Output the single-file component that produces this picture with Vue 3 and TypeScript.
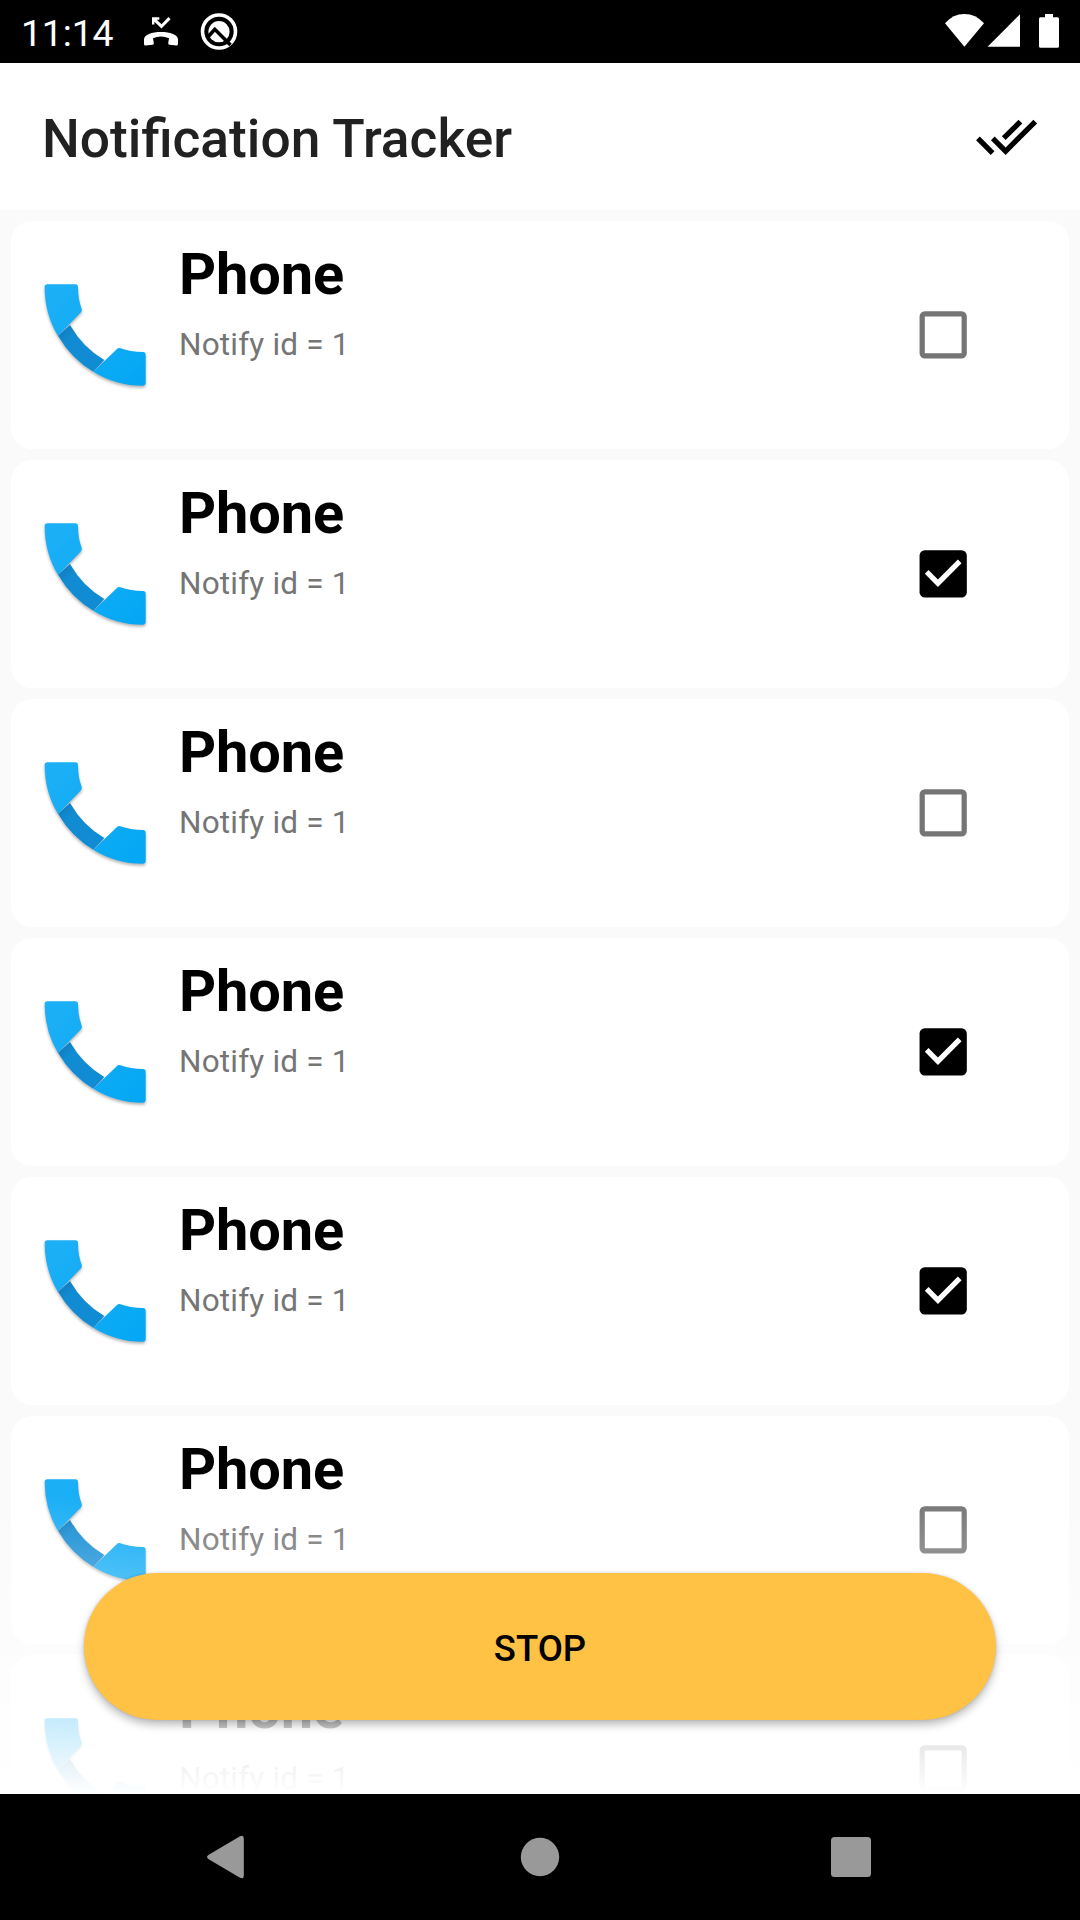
<script setup lang="ts">
interface NotificationItem {
  key: number
  title: string
  detail: string
  checked: boolean
}

const items: NotificationItem[] = [false, true, false, true, true, false, false].map(
  (checked, key) => ({ key, title: 'Phone', detail: 'Notify id = 1', checked }),
)
</script>

<template>
  <div class="screen">
    <header class="status">
      <span class="clock">11:14</span>
      <svg class="missed" width="36" height="32" viewBox="143 16 36 32" fill="#fff">
        <path d="M152 17.2H159.3V19.8H156.8L161.5 24.2L168.4 17.1L170.6 19.2L161.5 28.4L154.4 21.8V24.6H152Z" />
        <path d="M144 44V39.5C144 34.5 152 32 161 32S178 34.5 178 39.5V44Q178 45.6 176.4 45.4L169.5 44.8Q168 44.6 168.2 43L169 38.2Q161 35 153 38.2L153.8 43Q154 44.6 152.5 44.8L145.6 45.6Q144 45.6 144 44Z" />
      </svg>
      <svg class="badge" width="40" height="40" viewBox="199 12 40 40">
        <circle cx="219" cy="31.5" r="16.5" fill="none" stroke="#fff" stroke-width="3.6" />
        <circle cx="219" cy="31.7" r="10.6" fill="#fff" />
        <path d="M207.5 37.5L214.8 29.3L230.5 45" fill="none" stroke="#000" stroke-width="3.6" />
      </svg>
      <svg class="system" width="120" height="40" viewBox="942 11 120 40" fill="#fff">
        <path d="M964.4 46.8L945 23.3Q953 14 964.4 14T984 23.3Z" />
        <path d="M987.6 46.8H1020V14.2Z" />
        <path d="M1045 14H1053V17.3H1057.5Q1059 17.3 1059 18.8V46.3Q1059 47.8 1057.5 47.8H1040.5Q1039 47.8 1039 46.3V18.8Q1039 17.3 1040.5 17.3H1045Z" />
      </svg>
    </header>

    <div class="toolbar">
      <h1>Notification Tracker</h1>
      <svg width="63" height="63" viewBox="0 0 24 24">
        <path d="M18 7l-1.41-1.41-6.34 6.34 1.41 1.41L18 7zm4.24-1.41L11.66 16.17 7.48 12l-1.41 1.41L11.66 19l12-12-1.42-1.41zM.41 13.41L6 19l1.41-1.41L1.83 12 .41 13.41z" />
      </svg>
    </div>

    <main class="content">
      <div class="list">
        <article v-for="item in items" :key="item.key" class="card">
          <svg class="phone" width="130" height="130" viewBox="0 0 390 390">
            <defs>
              <linearGradient :id="'blue' + item.key" x1="44" y1="43" x2="347" y2="347" gradientUnits="userSpaceOnUse">
                <stop offset="0" stop-color="#1eb0f6" />
                <stop offset="1" stop-color="#03a7f4" />
              </linearGradient>
              <linearGradient :id="'deep' + item.key" x1="100" y1="182" x2="206" y2="288" gradientUnits="userSpaceOnUse">
                <stop offset="0" stop-color="#127fc0" />
                <stop offset=".2" stop-color="#118bd2" />
                <stop offset="1" stop-color="#108cd5" />
              </linearGradient>
            </defs>
            <path :fill="`url(#deep${item.key})`" d="M84 197L120 165Q158 232 223 270L190 305Q124 266 84 197Z" />
            <g :fill="`url(#blue${item.key})`">
              <path d="M44 51Q44 43 52 43H136Q144 43 144 51Q144 88 155 116Q157 121 153 127L84 198Q44 132 44 51Z" />
              <path d="M190 305L261 237Q265 233 271 235Q301 246 339 246Q347 246 347 254V338Q347 347 338 347Q258 347 190 305Z" />
            </g>
          </svg>
          <div class="text">
            <h2>{{ item.title }}</h2>
            <p>{{ item.detail }}</p>
          </div>
          <svg class="check" width="63" height="63" viewBox="0.12 -0.12 24 24">
            <template v-if="item.checked">
              <rect x="3" y="3" width="18" height="18" rx="2" />
              <path fill="#fff" d="M10 17l-5-5 1.41-1.41L10 14.17l7.59-7.59L19 8l-9 9z" />
            </template>
            <rect v-else x="4" y="4" width="16" height="16" rx="1" fill="none" stroke="#757575" stroke-width="2" />
          </svg>
        </article>
      </div>
      <div class="fade"></div>
      <button class="stop" type="button">STOP</button>
    </main>

    <nav class="nav">
      <svg width="1080" height="126" viewBox="0 1794 1080 126" fill="#999">
        <path d="M208.3 1855L239.6 1836.6Q243.8 1834.4 243.8 1838.5V1875.5Q243.8 1879.6 239.6 1877.4L208.3 1859Q205.8 1857 208.3 1855Z" />
        <circle cx="540" cy="1857" r="19.2" />
        <rect x="831" y="1837" width="40" height="40" rx="3.5" />
      </svg>
    </nav>
  </div>
</template>

<style>
body {
  margin: 0;
}
</style>

<style scoped>
.screen {
  width: 1080px;
  height: 1920px;
  display: flex;
  flex-direction: column;
  overflow: hidden;
  background: #fff;
  font-family: Roboto, sans-serif;
}

svg {
  display: block;
  flex: none;
}

.status {
  height: 63px;
  flex: none;
  display: flex;
  align-items: flex-start;
  background: #000;
  color: #fff;
}

.clock {
  width: 122px;
  padding: 11px 0 0 21px;
  font-size: 37.4px;
  line-height: 44px;
  letter-spacing: -0.15px;
}

.missed {
  margin-top: 16px;
}

.badge {
  margin: 12px 0 0 20px;
}

.system {
  margin: 11px 18px 0 auto;
}

.toolbar {
  height: 147px;
  flex: none;
  box-sizing: border-box;
  padding: 0 42px;
  display: flex;
  align-items: center;
  justify-content: space-between;
}

h1,
h2,
p {
  margin: 0;
}

h1 {
  color: #212121;
  font-size: 53.3px;
  font-weight: 500;
  line-height: 62px;
  padding-top: 4px;
}

.content {
  position: relative;
  height: 1584px;
  flex: none;
  overflow: hidden;
  background: #fafafa;
}

.list {
  display: flex;
  flex-direction: column;
  gap: 11px;
  padding: 11px;
}

.card {
  height: 228px;
  box-sizing: border-box;
  flex: none;
  display: flex;
  align-items: flex-start;
  padding: 19px 94px 0 19px;
  border-radius: 21px;
  background: #fff;
}

.phone {
  margin-top: 30px;
  overflow: visible;
  filter: drop-shadow(0 2px 1.5px rgba(0, 0, 0, 0.3));
}

.text {
  flex: 1;
  padding-left: 19px;
}

h2 {
  font-size: 57.75px;
  font-weight: 700;
  line-height: 68px;
  letter-spacing: -0.15px;
  color: #000;
}

p {
  margin-top: 18px;
  font-size: 31.5px;
  line-height: 37px;
  letter-spacing: 0.2px;
  color: #757575;
}

.check {
  margin-top: 63px;
}

.fade {
  position: absolute;
  left: 0;
  right: 0;
  bottom: 0;
  height: 300px;
  background: linear-gradient(rgba(255, 255, 255, 0), #fff);
}

.stop {
  position: absolute;
  left: 84px;
  right: 84px;
  bottom: 74px;
  height: 147px;
  padding: 3px 0 0;
  border: 0;
  border-radius: 74px;
  background: #ffc244;
  box-shadow: 0 5px 8px rgba(0, 0, 0, 0.26), 0 0 3px rgba(0, 0, 0, 0.14);
  color: #000;
  font: 500 36.5px/43px Roboto, sans-serif;
}

.nav {
  height: 126px;
  flex: none;
  background: #000;
}
</style>
